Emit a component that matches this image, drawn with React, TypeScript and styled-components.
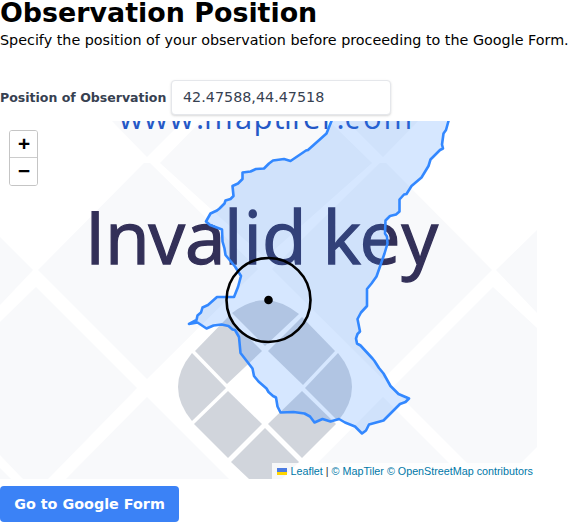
import React from "react";
import styled, { createGlobalStyle } from "styled-components";

const GlobalStyle = createGlobalStyle`
  *, *::before, *::after { box-sizing: border-box; }
  body { margin: 0; background: #fff; color: #000; font-family: "DejaVu Sans", sans-serif; overflow: hidden; }
`;

const Page = styled.main`
  display: flex;
  flex-direction: column;
  align-items: flex-start;
  width: 574px;
`;

const Title = styled.h1`
  margin: 0;
  height: 28px;
  font-size: 26.88px;
  line-height: 26px;
  font-weight: 700;
  white-space: nowrap;
`;

const Intro = styled.p`
  margin: 0;
  height: 24px;
  font-size: 14.336px;
  line-height: 24px;
  white-space: nowrap;
`;

const Field = styled.div`
  display: flex;
  align-items: center;
  gap: 4px;
  margin-top: 27px;
  height: 36px;
`;

const Label = styled.label`
  width: 167px;
  color: #374151;
  font-size: 12.544px;
  font-weight: 700;
  white-space: nowrap;
`;

const PositionInput = styled.input`
  width: 220px;
  height: 35px;
  padding: 0 11px;
  border: 1px solid #e5e7eb;
  border-radius: 4px;
  outline: none;
  color: #374151;
  background: #fff;
  font: 14.336px "DejaVu Sans", sans-serif;
  box-shadow: 0 1px 3px rgba(0, 0, 0, 0.1), 0 1px 2px rgba(0, 0, 0, 0.06);
`;

const MapFrame = styled.section`
  position: relative;
  width: 537px;
  height: 358px;
  margin-top: 6px;
  overflow: hidden;
`;

const MapCanvas = styled.svg`
  display: block;
  width: 537px;
  height: 358px;
`;

const ZoomControl = styled.div`
  position: absolute;
  top: 9px;
  left: 9px;
  display: flex;
  flex-direction: column;
  width: 29px;
  height: 56px;
  border: 1px solid #c5c5c5;
  border-radius: 3px;
  background: #fff;
  overflow: hidden;
`;

const ZoomButton = styled.button`
  height: 26px;
  padding: 3px 0 0;
  border: 0;
  background: #fff;
  color: #000;
  font: bold 21px/23px "Liberation Mono", monospace;
  text-indent: 1px;
  & + & { height: 28px; padding-top: 2px; border-top: 1px solid #ccc; }
`;

const Attribution = styled.div`
  position: absolute;
  right: 0;
  bottom: 0;
  width: 265px;
  height: 16px;
  padding-left: 5px;
  background: rgba(255, 255, 255, 0.8);
  color: #333;
  font: 10.752px/16px "Liberation Sans", sans-serif;
  white-space: nowrap;
`;

const Flag = styled.svg`
  width: 10px;
  height: 7px;
  margin-right: 0.5px;
`;

const MapLink = styled.a`
  color: #0078a8;
  text-decoration: none;
`;

const FormButton = styled.button`
  width: 179px;
  height: 36px;
  margin-top: 7px;
  padding: 0;
  border: 0;
  border-radius: 4px;
  background: #3b82f6;
  color: #fff;
  font: 700 14.336px "DejaVu Sans", sans-serif;
`;

const region =
  "331.5,115 331.5,121 326.5,133.5 308,150 306,150.5 290.5,161 284,159 273,160.5 269,163.5 264,168.5 256,169 250.5,171.5 242.5,172.5 242.5,179 238,183.5 232.5,186 233.5,196 230.5,199 225.5,200.5 224.5,203.5 219.5,208.5 217,210.5 210.5,213.5 206,221.5 210,225 222,229.5 222.5,241.5 224.5,248.5 225.5,255 235,266.5 241,276 238,287 234,297 217,297 208,305 202.5,307.5 201,312.5 197.5,315.5 196.5,320 189,324 197.5,322.5 206.5,328.5 213.5,325.5 221.5,324.5 228.5,326 232.5,329.5 235,330 239,337 240.5,353 252.5,368.5 254,376 258.5,381.5 266.5,388.5 268.5,392 273,396 276,397.5 277.5,406.5 280.5,412.5 293.5,412 304.5,413.5 310,416.5 314.5,422.5 322.5,419 330.5,421.5 339,419 345,422.5 355,426.5 362,433.5 366,430.5 369,424.5 383.5,420.5 400,404 405.5,402 409,398.5 398.5,394 390.5,386 383.5,373.5 379,368 374.5,361 372.5,358.5 360.5,345.5 357,343.5 356,338.5 357.5,334 360,331.5 357.5,319 361,312.5 367,306 367,289 371.5,283.5 376.5,276.5 380,266.5 384.5,253.5 387.5,243.5 387,236.5 385,233.5 385.5,220.5 390,216 396,214.5 399.5,211.5 399.5,199.5 404,194.5 406.5,194 411.5,186 421.5,177.5 428.5,166 430.5,159.5 440,150 443,148.5 442,144.5 443.5,133.5 446,130 448.5,121 450,115";

const blocks = [
  "M112 121L147 157L183 121Z",
  "M201 121H329L372 163L265 258L160 163Z",
  "M347 121L383 157L418 121Z",
  "M144 163H150L258 269L147 379L38 270Z",
  "M380 163H386L492 270L383 379L272 269Z",
  "M0 237L33 270L0 305Z",
  "M537 230L496 270L537 313Z",
  "M36 287L137 388L48 479H23L0 455V322Z",
  "M493 287L392 388L483 479H505L537 447V328Z",
  "M147 397L66 479H229Z",
  "M383 397L302 479H465Z",
  "M0 468L11 479H0Z",
];

const cells = [
  "M232 313Q265 287 299 314L265 346Z",
  "M195 351L228 317L262 351L227 384Z",
  "M268 351L302 317L335 351L303 385Z",
  "M192 353L226 388L192 421Q164 387 192 353Z",
  "M338 353L305 388L338 421Q366 387 338 353Z",
  "M228 391L262 424L228 458L194 424Z",
  "M302 391L336 424L302 458L268 424Z",
  "M265 428L299 462L282 479H249L231 462Z",
];

function ObservationMap() {
  return (
    <MapFrame>
      <MapCanvas viewBox="0 121 537 358">
        <rect y="121" width="537" height="358" fill="#fff" />
        {blocks.map((d) => <path key={d} d={d} fill="#f8f9fb" />)}
        {cells.map((d) => <path key={d} d={d} fill="#d1d5dc" />)}
        <text x="119 144 169.5 196 204 235 253.5 273.5 284 292 303 322 336.5 344.5 363 383.5" y="129" fill="#2458c7" fontFamily="Open Sans, sans-serif" fontSize="31">www.maptiler.com</text>
        <text x="85 105 148.5 185 224 243.5 262 306 322.5 359.5 401.5" y="264" fill="#333058" stroke="#333058" strokeWidth="1.3" fontFamily="Open Sans, sans-serif" fontSize="73">Invalid key</text>
        <polygon points={region} fill="#3388ff" fillOpacity=".2" stroke="#3388ff" strokeWidth="2.6" strokeLinejoin="round" />
        <circle cx="268.5" cy="300" r="42" fill="none" stroke="#000" strokeWidth="2.6" />
        <circle cx="268.5" cy="300" r="4.3" />
      </MapCanvas>
      <ZoomControl>
        <ZoomButton aria-label="Zoom in">+</ZoomButton>
        <ZoomButton aria-label="Zoom out">−</ZoomButton>
      </ZoomControl>
      <Attribution>
        <Flag viewBox="0 0 10 7"><path fill="#4c7be1" d="M0 0H10V4H0Z" /><path fill="#ffd500" d="M0 4H10V7H0Z" /></Flag>
        {" "}<MapLink>Leaflet</MapLink> | <MapLink>© MapTiler</MapLink> <MapLink>© OpenStreetMap contributors</MapLink>
      </Attribution>
    </MapFrame>
  );
}

export default function App() {
  return (
    <>
      <GlobalStyle />
      <Page>
        <Title>Observation Position</Title>
        <Intro>Specify the position of your observation before proceeding to the Google Form.</Intro>
        <Field>
          <Label htmlFor="position">Position of Observation</Label>
          <PositionInput id="position" defaultValue="42.47588,44.47518" />
        </Field>
        <ObservationMap />
        <FormButton>Go to Google Form</FormButton>
      </Page>
    </>
  );
}
